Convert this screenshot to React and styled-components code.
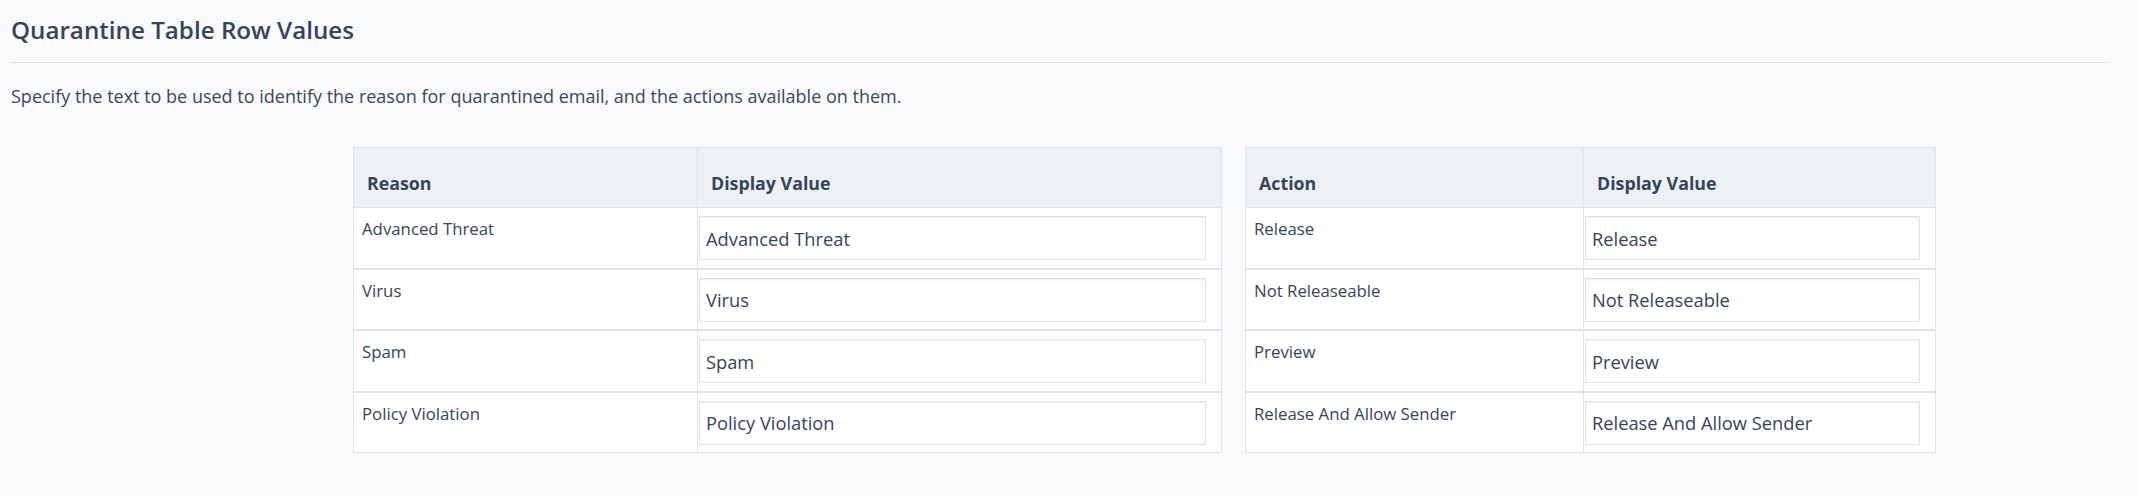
import React from 'react';
import styled, { createGlobalStyle } from 'styled-components';

const GlobalStyle = createGlobalStyle`
  html, body {
    margin: 0;
    padding: 0;
    background: #f9fafc;
  }
  body {
    font-family: "Open Sans", "Noto Sans", sans-serif;
    color: #36435a;
  }
  * {
    box-sizing: border-box;
  }
`;

const Page = styled.div`
  padding: 16px 31px 40px 11px;
`;

const Title = styled.h2`
  margin: 0;
  font-size: 24.2px;
  line-height: 28px;
  font-weight: 600;
  color: #36445a;
`;

const Divider = styled.hr`
  margin: 18px 0 0;
  border: 0;
  border-top: 1px solid #dcdfe5;
`;

const Description = styled.p`
  margin: 20px 0 0;
  font-size: 18px;
  line-height: 26px;
  color: #3a475c;
`;

const Tables = styled.div`
  display: flex;
  align-items: flex-start;
  gap: 23px;
  margin: 38px 0 0 342px;
`;

const Table = styled.table`
  border-collapse: collapse;
  table-layout: fixed;
  background: #fff;
  border: 1px solid #dfe3eb;
`;

const HeadCell = styled.th`
  width: ${(p) => p.$width}px;
  height: 60px;
  padding: 11px 13px 0;
  text-align: left;
  font-size: 17.8px;
  font-weight: 700;
  color: #36445a;
  background: #edf1f6;
  border: 1px solid #dfe3eb;
`;

const Row = styled.tr`
  border-bottom: 2px solid #dfe3eb;

  &:last-child {
    border-bottom: 1px solid #dfe3eb;
  }
`;

const LabelCell = styled.td`
  vertical-align: top;
  padding: 9px 8px 0;
  font-size: 16.8px;
  line-height: 24px;
  color: #36445a;
  border-right: 1px solid #dfe3eb;
`;

const InputCell = styled.td`
  padding: 8px 15px 7.5px 1px;
`;

const ValueInput = styled.input`
  display: block;
  width: 100%;
  height: 44px;
  padding: 0 6px;
  font-family: "Open Sans", "Noto Sans", sans-serif;
  font-size: 18.3px;
  color: #36445a;
  background: #fff;
  border: 1px solid #dfe2ea;
  border-radius: 0;
  box-shadow: inset 0 1px 2px rgba(40, 50, 70, 0.08);
  outline: none;
`;

const reasons = ['Advanced Threat', 'Virus', 'Spam', 'Policy Violation'];
const actions = ['Release', 'Not Releaseable', 'Preview', 'Release And Allow Sender'];

function ValueTable({ heading, items, widths }) {
  return (
    <Table>
      <thead>
        <tr>
          <HeadCell $width={widths[0]}>{heading}</HeadCell>
          <HeadCell $width={widths[1]}>Display Value</HeadCell>
        </tr>
      </thead>
      <tbody>
        {items.map((item) => (
          <Row key={item}>
            <LabelCell>{item}</LabelCell>
            <InputCell>
              <ValueInput type="text" defaultValue={item} />
            </InputCell>
          </Row>
        ))}
      </tbody>
    </Table>
  );
}

export default function App() {
  return (
    <>
      <GlobalStyle />
      <Page>
        <Title>Quarantine Table Row Values</Title>
        <Divider />
        <Description>
          Specify the text to be used to identify the reason for quarantined email, and the actions available on them.
        </Description>
        <Tables>
          <ValueTable heading="Reason" items={reasons} widths={[344, 524]} />
          <ValueTable heading="Action" items={actions} widths={[338, 352]} />
        </Tables>
      </Page>
    </>
  );
}
